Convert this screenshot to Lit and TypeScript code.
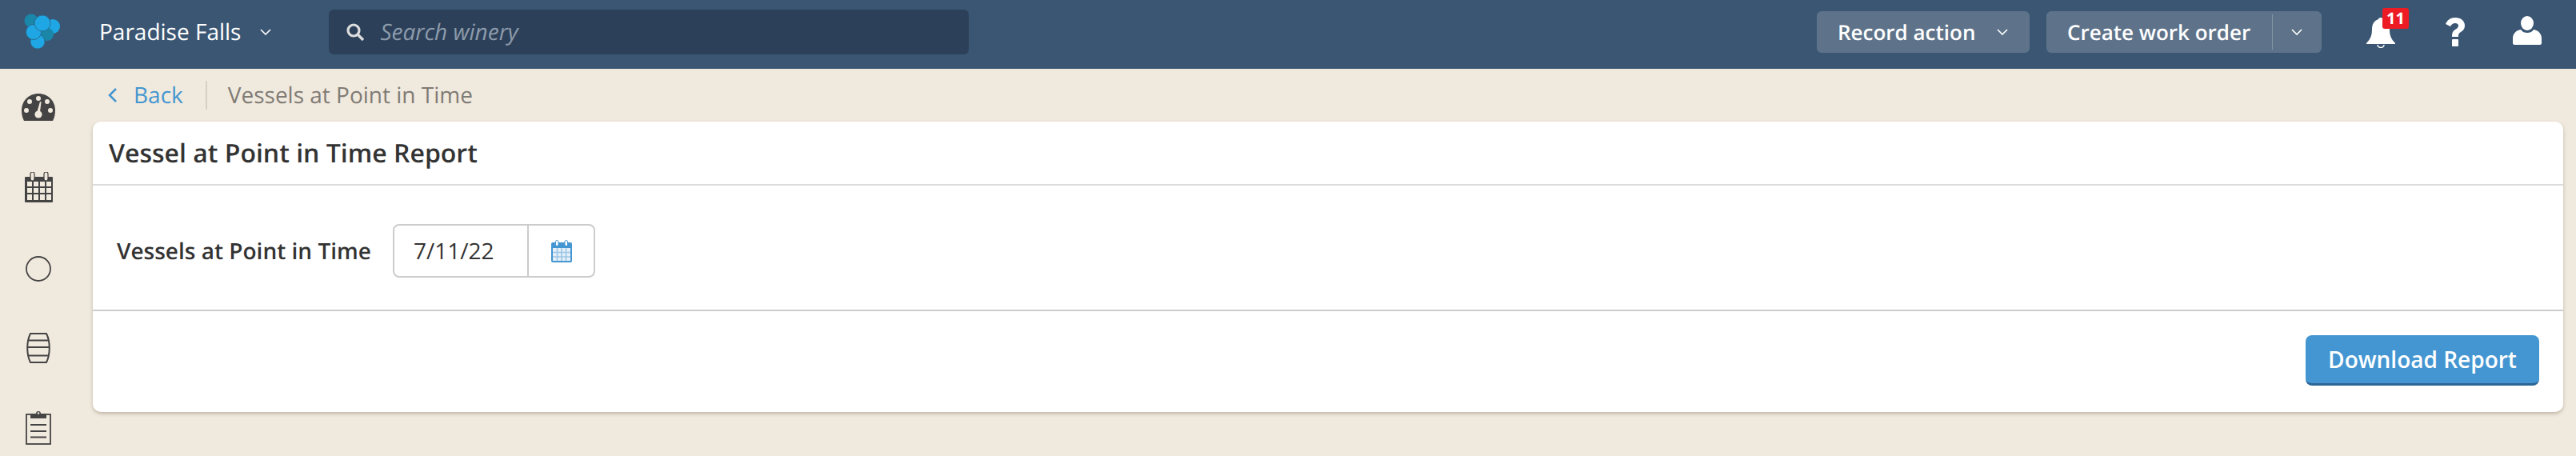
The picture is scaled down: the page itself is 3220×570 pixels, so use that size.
import { LitElement, html, css, svg } from "lit";
import { customElement } from "lit/decorators.js";

const chevron = () => html`<svg class="chev" width="14" height="8" viewBox="0 0 14 8"><path d="M1 1l6 6 6-6" fill="none" stroke="currentColor" stroke-width="1.600"/></svg>`;

const sideIcons = [
  svg`<svg width="42" height="34" viewBox="0 0 42 34"><path d="M0 21C0 9 9 0 21 0s21 9 21 21c0 5-1 9-3 13H3C1 30 0 26 0 21z" fill="#444"/><g fill="#f0e9dd"><circle cx="21" cy="6" r="3"/><circle cx="10" cy="10" r="3"/><circle cx="32" cy="10" r="3"/><circle cx="6" cy="21" r="3"/><circle cx="36" cy="21" r="3"/><circle cx="21" cy="26" r="4.600"/><path d="M19 24l4-14 1.600.5-2 15z"/></g></svg>`,
  svg`<svg width="35" height="38" viewBox="0 0 35 38"><path d="M1 6h33a1 1 0 0 1 1 1v30a1 1 0 0 1-1 1H1a1 1 0 0 1-1-1V7a1 1 0 0 1 1-1z" fill="#444"/><g fill="#f0e9dd"><rect x="3" y="12" width="6" height="6"/><rect x="11" y="12" width="6" height="6"/><rect x="19" y="12" width="6" height="6"/><rect x="27" y="12" width="6" height="6"/><rect x="3" y="20" width="6" height="6"/><rect x="11" y="20" width="6" height="6"/><rect x="19" y="20" width="6" height="6"/><rect x="27" y="20" width="6" height="6"/><rect x="3" y="28" width="6" height="7"/><rect x="11" y="28" width="6" height="7"/><rect x="19" y="28" width="6" height="7"/><rect x="27" y="28" width="6" height="7"/></g><rect x="7" y="0" width="5" height="11" rx="2.500" fill="#f0e9dd" stroke="#444" stroke-width="1.200"/><rect x="24" y="0" width="5" height="11" rx="2.500" fill="#f0e9dd" stroke="#444" stroke-width="1.200"/></svg>`,
  svg`<svg width="32" height="32" viewBox="0 0 32 32"><circle cx="16" cy="16" r="15" fill="none" stroke="#444" stroke-width="1.800"/></svg>`,
  svg`<svg width="30" height="38" viewBox="0 0 30 38" fill="none" stroke="#444" stroke-width="2"><path d="M5 1h20c5 10 5 26 0 36H5C0 27 0 11 5 1z"/><path d="M2.500 9.500h25M1.200 18h27.600M2.500 28.500h25"/></svg>`,
  svg`<svg width="32" height="44" viewBox="0 0 32 44"><rect x="1" y="6" width="30" height="37" fill="none" stroke="#444" stroke-width="1.800"/><path d="M6 5h7a3 3 0 0 1 6 0h7v6H6z" fill="#444"/><circle cx="16" cy="4.500" r="1.300" fill="#f0e9dd"/><path d="M6 19h20M6 27h20M6 34.500h20" stroke="#444" stroke-width="1.800"/></svg>`,
];

@customElement("app-root")
export class AppRoot extends LitElement {
  static styles = css`
    :host { display: block; height: 570px; overflow: hidden; background: #f0e9dd; font-family: "Open Sans", sans-serif; color: #333; text-rendering: geometricPrecision; }
    * { box-sizing: border-box; }
    .top { height: 86px; padding-bottom: 6px; background: #3a5673; display: flex; align-items: center; color: #fff; }
    .logo { margin-left: 30px; width: 46px; height: 46px; flex: none; }
    .org { margin-left: 48px; font-size: 28px; white-space: nowrap; flex: none; }
    .orgchev { margin: 0 72px 0 24px; color: #fff; }
    .chev { flex: none; display: block; }
    .search { width: 800px; height: 56px; background: #2c4059; border-radius: 6px; display: flex; align-items: center; padding-left: 22px; gap: 19px; font-style: italic; font-size: 28px; color: #8c9bab; flex: none; }
    .spacer { flex: 1; }
    .btn { height: 52px; background: #5e738a; border-radius: 6px; display: flex; align-items: center; font-size: 26px; font-weight: 600; color: #fff; white-space: nowrap; flex: none; }
    .rec { width: 266px; padding-left: 26px; gap: 27px; margin-right: 21px; }
    .cre { width: 344px; padding-left: 26px; }
    .cre .div { width: 1px; height: 44px; background: #8494a6; margin: 0 23px 0 27px; }
    .notif { margin-left: 56px; width: 53px; height: 52px; position: relative; flex: none; }
    .badge { position: absolute; left: 20px; top: -4px; width: 33px; height: 26px; background: #ed1c24; border-radius: 3px; font-size: 20px; line-height: 26px; font-weight: 700; text-align: center; color: #fff; }
    .bell { position: absolute; left: 0; top: 8px; display: block; }
    .help { margin-left: 45px; flex: none; display: block; }
    .user { margin-left: 59px; margin-right: 43px; margin-bottom: 4px; flex: none; display: block; }
    .body { display: flex; }
    .side { width: 116px; flex: none; display: flex; flex-direction: column; padding: 8px 0 0 0; gap: 20px; }
    .side .it { height: 80px; display: flex; align-items: center; justify-content: center; padding-right: 20px; flex: none; }
    .side .it:nth-child(3) { padding-top: 4px; }
    .side .it:nth-child(4) { padding-top: 2px; }
    .main { flex: 1; padding-right: 16px; min-width: 0; }
    .crumb { height: 66px; display: flex; align-items: center; font-size: 28px; color: #7f7b75; }
    .back { color: #4396d1; display: flex; align-items: center; gap: 20px; margin-left: 18px; }
    .sep { width: 2px; height: 36px; background: #d6cfc4; margin: 0 26px 0 28px; }
    .card { background: #fff; border-radius: 10px; box-shadow: 0 2px 4px rgba(80,60,40,.3); height: 363px; display: flex; flex-direction: column; }
    .hd { height: 80px; border-bottom: 2px solid #dcdcdc; display: flex; align-items: center; padding-left: 20px; font-size: 32px; font-weight: 600; flex: none; }
    .bd { height: 157px; border-bottom: 2px solid #ccc; display: flex; align-items: center; padding: 8px 0 0 30px; flex: none; }
    .lbl { font-size: 28px; font-weight: 600; width: 345px; flex: none; }
    .inp { width: 170px; height: 67px; border: 2px solid #ccc; border-radius: 8px 0 0 8px; display: flex; align-items: center; padding-left: 24px; font-size: 28px; }
    .cal { width: 83px; height: 67px; border: 2px solid #ccc; border-left: 0; border-radius: 0 8px 8px 0; display: flex; align-items: center; justify-content: center; }
    .ft { flex: 1; display: flex; align-items: flex-start; justify-content: flex-end; padding: 30px 30px 0 0; }
    .dl { width: 292px; height: 63px; background: #4396d1; border-radius: 8px; border: 0; border-bottom: 3px solid #2a6596; color: #fff; font: 600 28px "Open Sans", sans-serif; padding: 0; }
  `;

  render() {
    return html`
      <div class="top">
        <svg class="logo" viewBox="0 0 46 46">
          <circle cx="9" cy="9" r="8.500" fill="#1a86a8"/>
          <circle cx="36" cy="16" r="9" fill="#1ea7e4"/>
          <circle cx="29" cy="26" r="8" fill="#1a86a8"/>
          <circle cx="17" cy="35" r="9" fill="#1ea7e4" stroke="#2b6d94" stroke-width="1"/>
          <circle cx="12" cy="23" r="9.500" fill="#1ea7e4" stroke="#2b6d94" stroke-width="1"/>
          <circle cx="23" cy="12" r="10" fill="#1ea7e4" stroke="#2b6d94" stroke-width="1"/>
        </svg>
        <div class="org">Paradise Falls</div>
        <div class="orgchev">${chevron()}</div>
        <div class="search">
          <svg width="23" height="22" viewBox="0 0 23 22"><circle cx="9" cy="9" r="7" fill="none" stroke="#ddd" stroke-width="3.200"/><path d="M14 14l7 7" stroke="#ddd" stroke-width="3.400"/></svg>
          <span>Search winery</span>
        </div>
        <div class="spacer"></div>
        <div class="btn rec">Record action ${chevron()}</div>
        <div class="btn cre">Create work order<span class="div"></span>${chevron()}</div>
        <div class="notif">
          <svg class="bell" width="36" height="38" viewBox="0 0 36 38"><path d="M18 0c2 0 3 1 3 2 6 2 8 7 8 13 0 7 2 12 7 17v1H0v-1c5-5 7-10 7-17 0-6 2-11 8-13 0-1 1-2 3-2z" fill="#fff"/><path d="M14 34a4 3.500 0 0 0 8 0" fill="none" stroke="#fff" stroke-width="1.500"/></svg>
          <div class="badge">11</div>
        </div>
        <svg class="help" width="26" height="36" viewBox="0 0 26 36"><path d="M1 8C3 3 7 0 13 0c7 0 12 4 12 10 0 4-2 6-5 8-3 2-3 3-3 6H9c0-5 1-7 4-9 3-2 4-3 4-5 0-2-2-3-4-3-3 0-5 2-6 4z" fill="#fff"/><rect x="9" y="27" width="8" height="9" rx="1" fill="#fff"/></svg>
        <svg class="user" width="36" height="36" viewBox="0 0 36 36"><ellipse cx="18" cy="9" rx="8" ry="9" fill="#fff"/><path d="M10 17c2 3 5 4 8 4s6-1 8-4c6 1 10 5 10 11v6c0 1-1 2-2 2H2c-1 0-2-1-2-2v-6c0-6 4-10 10-11z" fill="#fff"/></svg>
      </div>
      <div class="body">
        <div class="side">${sideIcons.map((i) => html`<div class="it">${i}</div>`)}</div>
        <div class="main">
          <div class="crumb">
            <span class="back"><svg width="13" height="20" viewBox="0 0 13 20"><path d="M11 2L3 10l8 8" fill="none" stroke="#4396d1" stroke-width="2.500"/></svg>Back</span>
            <span class="sep"></span>
            <span>Vessels at Point in Time</span>
          </div>
          <div class="card">
            <div class="hd">Vessel at Point in Time Report</div>
            <div class="bd">
              <div class="lbl">Vessels at Point in Time</div>
              <div class="inp">7/11/22</div>
              <div class="cal">
                <svg width="26" height="28" viewBox="0 0 26 28"><rect x="0" y="3" width="26" height="25" rx="2" fill="#4396d1"/><path d="M2 10h22v16H2z" fill="#e4eff8"/><path d="M7.500 10v16M13 10v16M18.500 10v16M2 15.500h22M2 21h22" stroke="#9cc6e6" stroke-width="1.600"/><rect x="5.500" y="0.500" width="3.500" height="7" rx="1.700" fill="#fff" stroke="#4396d1"/><rect x="17" y="0.500" width="3.500" height="7" rx="1.700" fill="#fff" stroke="#4396d1"/></svg>
              </div>
            </div>
            <div class="ft"><button class="dl">Download Report</button></div>
          </div>
        </div>
      </div>
    `;
  }
}
